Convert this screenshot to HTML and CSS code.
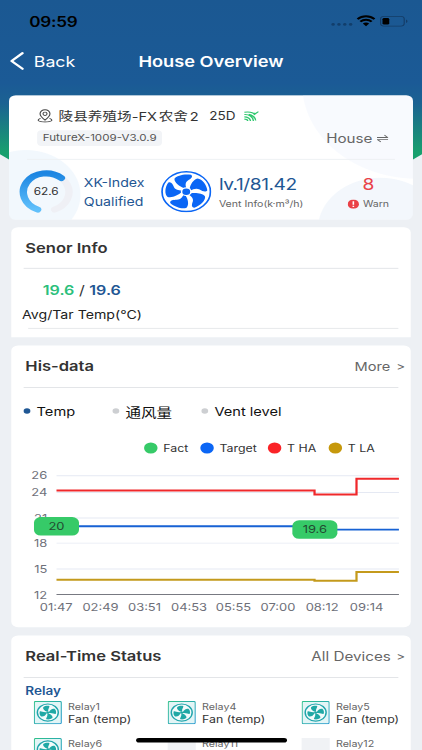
FILE: index.html
```html
<!DOCTYPE html>
<html lang="en">
<head>
<meta charset="utf-8">
<title>House Overview</title>
<link rel="stylesheet" href="styles.css">
</head>
<body>
<svg class="defs" width="0" height="0">
  <defs>
    <linearGradient id="teal" x1="0" y1="0" x2="1" y2="1"><stop offset="0" stop-color="#2fc18b"/><stop offset="1" stop-color="#2398cf"/></linearGradient>
    <linearGradient id="arc" x1="0" y1="0" x2="0" y2="1"><stop offset="0" stop-color="#1c86e2"/><stop offset="1" stop-color="#60c0fb"/></linearGradient>
    <g id="blades">
      <path id="blade" d="M20.800 18.800C16.500 17 11.800 12.500 12 8.500C14 4.800 21 3 26.800 4.200C29 6.500 26.500 8.500 24 10.500C21.500 12.500 21.700 16 22.600 18.500Z"/>
      <use href="#blade" transform="rotate(72 22.500 22.500)"/>
      <use href="#blade" transform="rotate(144 22.500 22.500)"/>
      <use href="#blade" transform="rotate(216 22.500 22.500)"/>
      <use href="#blade" transform="rotate(288 22.500 22.500)"/>
    </g>
    <symbol id="relay-fan" viewBox="0 0 25 25">
      <rect x=".5" y=".5" width="24" height="24" rx="1" fill="#e3f5f6" stroke="url(#teal)"/>
      <circle cx="12.500" cy="12.500" r="9.300" fill="#f3fbfb" stroke="#20a5ac" stroke-width="1.300"/>
      <g fill="#20a8a5">
        <path id="rb" d="M11.900 11.500C9.500 10.500 7.800 8.600 8.400 6.600C9.800 5.200 12 4.900 13.800 5.300C14.400 6.800 12.500 8 12.900 11.300Z"/>
        <use href="#rb" transform="rotate(90 12.500 12.500)"/>
        <use href="#rb" transform="rotate(180 12.500 12.500)"/>
        <use href="#rb" transform="rotate(270 12.500 12.500)"/>
        <circle cx="12.500" cy="12.500" r="1.300"/>
      </g>
    </symbol>
  </defs>
</svg>
<div class="phone">
  <header class="top">
    <div class="status">
      <span class="clock">09:59</span>
      <svg class="signals" width="78" height="16" viewBox="0 0 78 16">
        <g fill="#123e6b"><circle cx="3" cy="11.500" r="1.500"/><circle cx="8.200" cy="11.500" r="1.500"/><circle cx="13.400" cy="11.500" r="1.500"/><circle cx="18.600" cy="11.500" r="1.500"/></g>
        <g fill="none" stroke="#000" stroke-width="2.100"><path d="M24.700 5.700C29 1.500 35.500 1.500 39.800 5.700"/><path d="M27.200 8.400C30.100 5.600 34.400 5.600 37.300 8.400"/></g>
        <path d="M29.400 10.500C31 9 33.500 9 35.100 10.500L32.250 13.400Z"/>
        <rect x="45.200" y="2.700" width="21" height="10.600" rx="3" fill="none" stroke="#143c66"/>
        <rect x="46.900" y="4.400" width="6" height="7.200" rx="1.500"/>
        <path d="M67.800 6.200C69.600 6.800 69.600 9.200 67.800 9.800Z" fill="#143c66"/>
      </svg>
    </div>
    <nav class="nav">
      <svg width="14" height="20" viewBox="0 0 14 20"><path d="M12 1.500L2.300 10L12 18.500" fill="none" stroke="#fff" stroke-width="2.300" stroke-linecap="round" stroke-linejoin="round"/></svg>
      <span class="back">Back</span>
      <h1>House Overview</h1>
    </nav>
  </header>

  <section class="card hero">
    <div class="farm">
      <svg width="14" height="15" viewBox="0 0 14 15" fill="none" stroke="#444"><path d="M7 12C4.500 9.700 2.600 7.600 2.600 5.200A4.400 4.400 0 0 1 11.400 5.200C11.400 7.600 9.500 9.700 7 12Z"/><circle cx="7" cy="5.200" r="1.800"/><path d="M3 10.200C-1 12 1 14 7 14S15 12 11 10.200"/></svg>
      <span class="name">陵县养殖场-FX<span class="gap">农舍</span><span class="gap">2</span></span>
      <span class="days">25D</span>
      <svg width="13" height="12" viewBox="0 0 13 12" fill="none" stroke="#2dc76d" stroke-width="1.200"><path d="M0 1.500C4 .8 8 1.500 9.700 4.200L8.500 2M0 4C4 3.600 8 6.300 8.200 11M0 6.500C3 6.500 5.500 8.500 5.600 11M0 9C1.800 9 3 9.800 3.200 11M4 3.800C8 5 10 7.500 10.200 10.500M8.500 4.200L12.700 .8"/></svg>
    </div>
    <div class="device">
      <span class="tag">FutureX-1009-V3.0.9</span>
      <span class="house">House</span>
      <svg width="10" height="10" viewBox="0 0 11 10" fill="none" stroke="#666"><path d="M0 3.800H10.500L7.300 1M11 6.200H.5L3.700 9"/></svg>
    </div>
    <div class="stats">
      <div class="gauge">
        <svg width="48" height="48" viewBox="0 0 48 48" fill="none" stroke-width="6.600" stroke-linecap="round">
          <circle cx="24" cy="24" r="20.300" stroke="#eff0f5" pathLength="360" stroke-dasharray="316 44" transform="rotate(112 24 24)"/>
          <path d="M16.400 42.800A20.300 20.300 0 1 1 37.500 8.800" stroke="url(#arc)"/>
        </svg>
        <span>62.6</span>
      </div>
      <div class="index"><span>XK-Index</span><span>Qualified</span></div>
      <svg class="fan" width="45" height="45" viewBox="0 0 45 45">
        <circle cx="22.500" cy="22.500" r="21.500" fill="#fff" stroke="#0b66f5" stroke-width="1.500"/>
        <use href="#blades" fill="#0b66f5"/>
        <circle cx="22.500" cy="22.500" r="4.800" fill="#fff"/><circle cx="22.500" cy="22.500" r="3.500" fill="#0b66f5"/>
      </svg>
      <div class="vent"><b>lv.1/81.42</b><span>Vent Info(k·m³/h)</span></div>
      <div class="warn"><b>8</b><span><svg width="10" height="10" viewBox="0 0 10 10"><circle cx="5" cy="5" r="5" fill="#ea4147"/><path d="M5 2V5.600M5 6.800V8" stroke="#fff" stroke-width="1.400"/></svg>Warn</span></div>
    </div>
  </section>

  <section class="card sensor">
    <div class="head"><h2>Senor Info</h2></div>
    <p class="temps"><b class="g">19.6</b> / <b class="b">19.6</b></p>
    <p class="caption">Avg/Tar Temp(°C)</p>
    <hr>
  </section>

  <section class="card history">
    <div class="head"><h2>His-data</h2><span class="more">More <i>&gt;</i></span></div>
    <div class="tabs">
      <span class="on">Temp</span><span class="cjk">通风量</span><span>Vent level</span>
    </div>
    <div class="legend">
      <span class="k1">Fact</span><span class="k2">Target</span><span class="k3">T HA</span><span class="k4">T LA</span>
    </div>
    <svg class="chart" width="355" height="177" viewBox="10 500 355 177">
      <g stroke="#e5e9f3"><path d="M50.200 515H354.500M50.200 533.200H354.500M50.200 560.900H354.500M50.200 588H354.500M50.200 616H354.500"/></g>
      <path d="M50.200 643.700H354.500" stroke="#777981"/>
      <g class="axis" text-anchor="end"><text x="42" y="519.100">26</text><text x="42" y="537.300">24</text><text x="42" y="565">21</text><text x="42" y="592.300">18</text><text x="42" y="620.200">15</text><text x="42" y="648">12</text></g>
      <g class="axis" text-anchor="middle"><text x="50" y="661.600">01:47</text><text x="89.300" y="661.600">02:49</text><text x="128.400" y="661.600">03:51</text><text x="168" y="661.600">04:53</text><text x="207.500" y="661.600">05:55</text><text x="247" y="661.600">07:00</text><text x="286.300" y="661.600">08:12</text><text x="325.700" y="661.600">09:14</text></g>
      <g fill="none" stroke-width="2">
        <path stroke="#f0282b" d="M50.200 531H279.500V535.400H316.800V518.300H354.500"/>
        <path stroke="#1762d4" d="M50.200 569.800H279.500V573.400H354.500"/>
        <path stroke="#c49a1c" d="M50.200 627.700H279.500V628.800H316.800V619.300H354.500"/>
      </g>
      <g fill="#36ca68"><rect x="30.200" y="559.800" width="40" height="20" rx="6"/><rect x="259.800" y="563.300" width="40" height="20" rx="6"/></g>
      <g class="pin" text-anchor="middle"><text x="50.200" y="574.100">20</text><text x="279.800" y="577.500">19.6</text></g>
    </svg>
  </section>

  <section class="card live">
    <div class="head"><h2>Real-Time Status</h2><span class="more">All Devices <i>&gt;</i></span></div>
    <h3>Relay</h3>
    <div class="relays">
      <div class="relay"><svg width="25" height="25"><use href="#relay-fan"/></svg><p>Relay1<b>Fan (temp)</b></p></div>
      <div class="relay"><svg width="25" height="25"><use href="#relay-fan"/></svg><p>Relay4<b>Fan (temp)</b></p></div>
      <div class="relay"><svg width="25" height="25"><use href="#relay-fan"/></svg><p>Relay5<b>Fan (temp)</b></p></div>
      <div class="relay"><svg width="25" height="25"><use href="#relay-fan"/></svg><p>Relay6</p></div>
      <div class="relay"><i class="blank"></i><p>Relay11</p></div>
      <div class="relay"><i class="blank"></i><p>Relay12</p></div>
    </div>
  </section>
  <div class="homebar"></div>
</div>
</body>
</html>
```
FILE: styles.css
```css
* { box-sizing: border-box; margin: 0; padding: 0; }
html, body { width: 422px; height: 750px; overflow: hidden; background: #edf0f4; }
.defs { position: absolute; }
svg { display: block; flex: none; }

/* 375 x 812 point layout scaled to the window */
.phone {
  position: relative;
  width: 375px;
  height: 812px;
  margin-bottom: -62px;
  overflow: hidden;
  background: #edf0f4;
  color: #333;
  font-family: Inter, "Noto Sans CJK SC", sans-serif;
  transform: scale(1.12533, .92365);
  transform-origin: 0 0;
  white-space: nowrap;
}

.top {
  height: 225px;
  margin-bottom: -122px;
  background: linear-gradient(#1b5892 0, #1b5a96 90px, #1b6292 112px, #18a06e 165px);
  clip-path: ellipse(280px 225px at 50% 0);
}
.status { display: flex; justify-content: space-between; align-items: center; height: 46px; padding: 0 6.500px 0 26px; }
.clock { font-size: 15.200px; font-weight: 600; color: #000; letter-spacing: -.2px; }
.signals { margin-right: -2px; }
.nav { display: grid; grid-template-columns: 14px 80px 1fr; align-items: center; height: 40px; padding-left: 8px; color: #fff; }
.back { padding-left: 8px; font-size: 15.800px; }
.nav h1 { padding-left: 21px; font-size: 16.200px; font-weight: 600; }

.card { position: relative; width: 355px; margin: 0 0 9px 10px; background: #fff; border-radius: 6px; overflow: hidden; }
.head { display: flex; align-items: center; justify-content: space-between; height: 46px; margin: 0 11px; border-bottom: 1px solid #e1e3e7; padding: 1px 0 0 2px; }
.head h2 { font-size: 14.700px; font-weight: 600; margin-left: -.5px; }
.more { margin-right: -6px; font-size: 13.500px; color: #666; }
.more i { margin-left: 1px; font-style: normal; font-size: 12px; }

.hero {
  width: 359px; height: 135px; margin: 0 0 8px 8px;
  background:
    radial-gradient(circle at 15px 108px, #f2f8fd 0 48px, transparent 49px),
    radial-gradient(circle at 330px 145px, #f3f7fc 0 55px, transparent 56px),
    radial-gradient(circle at 363px -12px, #f8fafe 0 102px, transparent 103px), #fff;
}
.farm { display: flex; align-items: center; height: 34px; padding: 11px 0 0 25px; }
.name { margin-left: 5px; font-size: 13px; width: 128px; }
.gap { margin-left: 1.500px; }
.days { margin-left: 6px; font-size: 12px; width: 31px; }
.device { display: flex; align-items: center; height: 36px; margin: 0 16px; padding: 0 6px 10px 9px; border-bottom: 1px solid #edf0f3; }
.tag { width: 111px; height: 17px; padding-left: 5px; line-height: 17px; font-size: 10.300px; color: #555; background: #f2f4f7; border-radius: 4px; }
.house { margin: 0 4px 0 auto; font-size: 13.500px; color: #666; }
.stats { display: flex; align-items: center; height: 65px; padding: 4px 0 0 9px; }
.gauge { display: grid; width: 48px; height: 48px; }
.gauge > * { grid-area: 1 / 1; }
.gauge span { align-self: center; text-align: center; font-size: 10.500px; }
.index { display: grid; width: 68px; margin-left: 9.500px; row-gap: 4px; font-size: 12.600px; line-height: 17px; color: #1f5794; }
.vent { display: grid; width: 114px; margin: 4px 0 0 7px; }
.vent b, .warn b { font-size: 17px; font-weight: 400; line-height: 22px; color: #1f5794; letter-spacing: -.4px; }
.vent span, .warn span { font-size: 9.400px; line-height: 20px; color: #666; }
.warn { display: grid; margin-top: 4px; }
.warn b { color: #e94248; text-align: center; }
.warn span { display: flex; align-items: center; gap: 4px; }

.sensor { height: 119px; border-radius: 6px 6px 0 0; }
.sensor .head { height: 45px; padding-top: 2px; }
.temps { margin: 11px 0 0 28px; font-size: 14.300px; line-height: 24px; }
.temps b { font-weight: 600; }
.g { color: #2cbf7c; }
.b { color: #1f5794; }
.caption { margin: 3px 0 0 9.500px; font-size: 12.600px; line-height: 24px; color: #222; }
hr { height: 1px; margin: 2px 11px 0 15px; border: 0; background: #e5e7ea; }

.history { height: 305px; }
.history .more { font-size: 13px; }
.history .more i { margin-left: 1.500px; }
.tabs { display: flex; height: 50px; align-items: center; padding-left: 11px; font-size: 13px; color: #111; }
.tabs span { display: flex; align-items: center; width: 79px; }
.tabs .cjk { font-size: 13.800px; }
.tabs span::before { content: ""; width: 6px; height: 6px; margin-right: 5.500px; border-radius: 50%; background: #cdcfd2; }
.tabs .on::before { background: #1f5794; }
.tabs span:last-child { width: 90px; }
.legend { display: flex; height: 30px; align-items: center; padding-left: 118px; font-size: 11px; }
.legend span { display: flex; align-items: center; }
.legend span::before { content: ""; width: 12px; height: 12px; margin-right: 5px; border-radius: 50%; background: #36ca68; }
.legend .k1 { width: 50px; }
.legend .k2 { width: 60px; }
.legend .k2::before { background: #0b66f5; }
.legend .k3 { width: 54px; }
.legend .k3::before { background: #fa2327; }
.legend .k4::before { background: #c6980b; }
.axis { font-size: 11.500px; fill: #6e7079; }
.pin { font-size: 11.500px; fill: #234b32; }

.live { height: 124px; margin-bottom: 0; border-radius: 6px 6px 0 0; }
.live h3 { margin: 5px 0 0 12.500px; font-size: 12px; font-weight: 600; line-height: 17px; color: #1f5794; }
.relays { display: grid; grid-template-columns: repeat(3, 119px); grid-auto-rows: 25px; row-gap: 15px; padding: 3px 0 0 20px; }
.relay { display: flex; gap: 5.500px; }
.relay p { padding-top: .5px; font-size: 9.500px; line-height: 12px; color: #666; }
.relay b { display: block; font-size: 11px; font-weight: 400; line-height: 15px; color: #333; }
.blank { width: 25px; height: 25px; background: #f0f2f5; }
.homebar { position: absolute; left: 121px; top: 799px; width: 134px; height: 5px; border-radius: 3px; background: #000; }
```
